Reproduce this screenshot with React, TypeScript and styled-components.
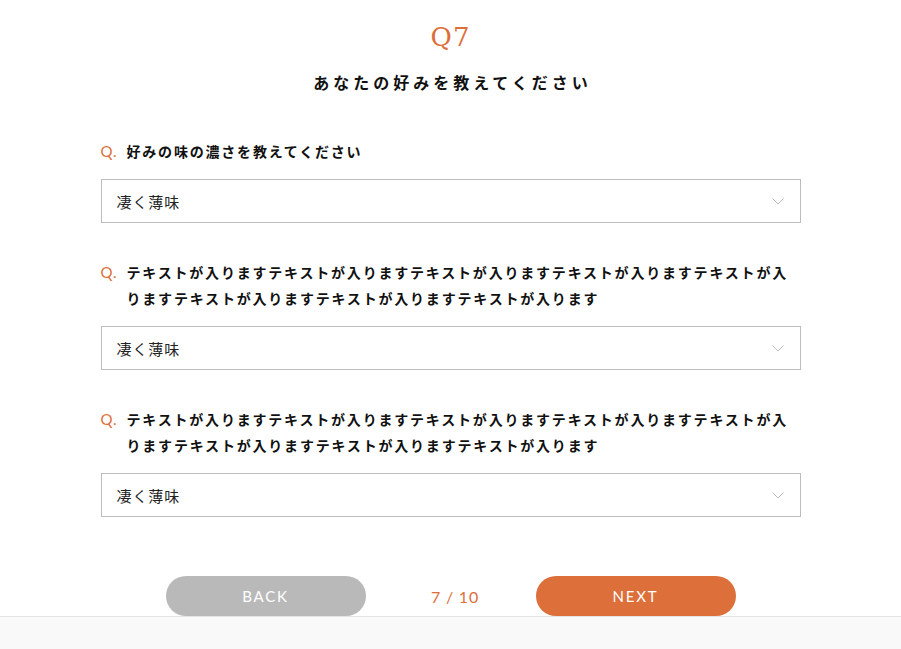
import React from "react";
import styled, { createGlobalStyle } from "styled-components";

const Global = createGlobalStyle`
  html, body { margin: 0; padding: 0; background: #fff; }
  body { font-family: "Noto Sans CJK JP", "Noto Sans", sans-serif; color: #111; }
`;

const Page = styled.div`
  display: flex;
  flex-direction: column;
  min-height: 649px;
`;

const Main = styled.main`
  width: 700px;
  margin: 0 auto;
  padding-top: 17px;
  display: flex;
  flex-direction: column;
`;

const StepTitle = styled.h1`
  margin: 0;
  text-align: center;
  font-family: "DejaVu Serif", "Liberation Serif", serif;
  font-weight: 400;
  font-size: 26px;
  line-height: 40px;
  letter-spacing: 0.04em;
  color: #dd6f3a;
`;

const Heading = styled.h2`
  margin: 13px 0 0;
  padding-left: 4px;
  text-align: center;
  font-size: 16px;
  font-weight: 700;
  line-height: 24px;
  letter-spacing: 0.25em;
  color: #111;
`;

const QuestionList = styled.div`
  display: flex;
  flex-direction: column;
  gap: 36px;
  margin-top: 44px;
`;

const Question = styled.section`
  display: flex;
  flex-direction: column;
  gap: 15px;
`;

const Label = styled.div`
  display: flex;
  font-size: 14px;
  font-weight: 700;
  line-height: 26px;
  letter-spacing: 1.8px;
  color: #111;
`;

const QMark = styled.span`
  flex: 0 0 26px;
  font-family: "Lato", "Open Sans", sans-serif;
  font-weight: 400;
  font-size: 15px;
  letter-spacing: 0.05em;
  color: #dd6f3a;
`;

const LabelText = styled.span`
  flex: 1;
  line-break: anywhere;
`;

const Select = styled.div`
  box-sizing: border-box;
  height: 44px;
  border: 1px solid #bdbdbd;
  background: #fff;
  display: flex;
  align-items: center;
  justify-content: space-between;
  padding: 0 16px 0 15px;
  font-size: 15px;
  letter-spacing: 0.06em;
  color: #222;
`;

const Footer = styled.div`
  display: flex;
  justify-content: center;
  align-items: center;
  margin-top: 59px;
`;

const Pill = styled.button<{ $primary?: boolean }>`
  width: 200px;
  height: 40px;
  border: none;
  border-radius: 20px;
  background: ${(p) => (p.$primary ? "#dd6f3a" : "#b9b9b9")};
  color: #fff;
  font-family: "Lato", "Open Sans", sans-serif;
  font-size: 15px;
  letter-spacing: 0.12em;
  padding: 0;
`;

const Counter = styled.div`
  width: 170px;
  text-align: center;
  padding-left: 9px;
  box-sizing: border-box;
  font-family: "Lato", "Open Sans", sans-serif;
  font-size: 16px;
  letter-spacing: 0.05em;
  color: #dd6f3a;
`;

const Band = styled.div`
  flex: 1;
  min-height: 32px;
  background: #f9f9f9;
  border-top: 1px solid #e3e3e3;
`;

const Chevron = () => (
  <svg width="12" height="7" viewBox="0 0 12 7" fill="none">
    <path d="M0.5 0.5 L6 6 L11.5 0.5" stroke="#bdbdbd" strokeWidth="1" />
  </svg>
);

const longText =
  "テキストが入りますテキストが入りますテキストが入りますテキストが入りますテキストが入りますテキストが入りますテキストが入りますテキストが入ります";

const questions = ["好みの味の濃さを教えてください", longText, longText];

export default function App() {
  return (
    <Page>
      <Global />
      <Main>
        <StepTitle>Q7</StepTitle>
        <Heading>あなたの好みを教えてください</Heading>
        <QuestionList>
          {questions.map((q, i) => (
            <Question key={i}>
              <Label>
                <QMark>Q.</QMark>
                <LabelText>{q}</LabelText>
              </Label>
              <Select>
                <span>凄く薄味</span>
                <Chevron />
              </Select>
            </Question>
          ))}
        </QuestionList>
        <Footer>
          <Pill>BACK</Pill>
          <Counter>7 / 10</Counter>
          <Pill $primary>NEXT</Pill>
        </Footer>
      </Main>
      <Band />
    </Page>
  );
}
